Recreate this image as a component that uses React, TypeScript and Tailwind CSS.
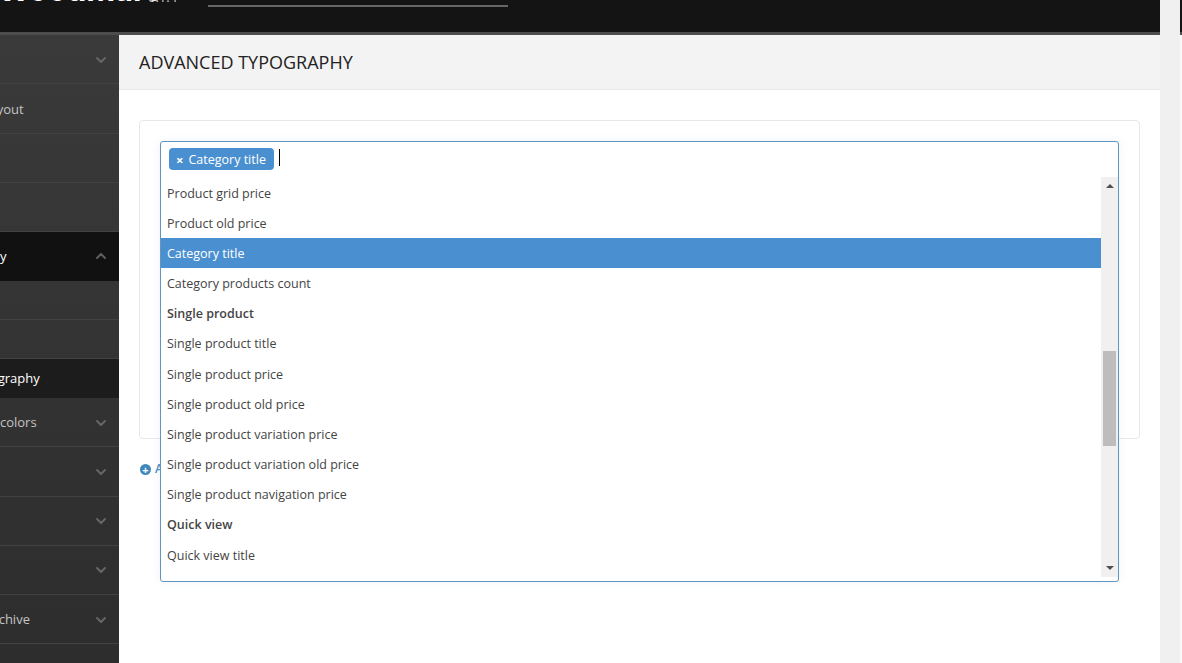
import { ChevronDown, ChevronUp } from "lucide-react";

const FONT = "font-['Open_Sans','Noto_Sans',sans-serif]";

type NavRow = { label: string; kind?: "open" | "sub" | "current"; chevron?: boolean };

const NAV: NavRow[] = [
  { label: "General", chevron: true },
  { label: "General layout" },
  { label: "Page title" },
  { label: "Footer" },
  { label: "Typography", kind: "open", chevron: true },
  { label: "Basic", kind: "sub" },
  { label: "Custom", kind: "sub" },
  { label: "Advanced typography", kind: "current" },
  { label: "Styles and colors", chevron: true },
  { label: "Blog", chevron: true },
  { label: "Portfolio", chevron: true },
  { label: "Shop", chevron: true },
  { label: "Product archive", chevron: true },
  { label: "Single" },
];

const OPTIONS: { label: string; group?: boolean; on?: boolean }[] = [
  { label: "Product grid price" },
  { label: "Product old price" },
  { label: "Category title", on: true },
  { label: "Category products count" },
  { label: "Single product", group: true },
  { label: "Single product title" },
  { label: "Single product price" },
  { label: "Single product old price" },
  { label: "Single product variation price" },
  { label: "Single product variation old price" },
  { label: "Single product navigation price" },
  { label: "Quick view", group: true },
  { label: "Quick view title" },
];

function SideRow({ row }: { row: NavRow }) {
  const sub = row.kind === "sub" || row.kind === "current";
  const height = sub ? "h-[39.2px]" : row.kind === "open" ? "h-[48.5px]" : "h-[49.25px]";
  return (
    <div
      className={`flex items-center justify-between border-b pr-[10px] text-[13px] ${height} ${
        row.kind === "open"
          ? "border-[#111111] bg-[#111111] text-white"
          : row.kind === "current"
            ? "border-[#1c1c1c] bg-[#1c1c1c] text-white"
            : "border-[#424242] text-[#c4c4c4]"
      }`}
    >
      <span
        className={`whitespace-nowrap pt-[2px] ${
          row.kind === "current" ? "-ml-[92px]" : "-ml-[65px]"
        }`}
      >
        {row.label}
      </span>
      {row.chevron &&
        (row.kind === "open" ? (
          <ChevronUp size={16} strokeWidth={3} className="mt-px text-[#5e5e5e]" />
        ) : (
          <ChevronDown size={16} strokeWidth={3} className="mt-px text-[#666666]" />
        ))}
    </div>
  );
}

function Dropdown() {
  return (
    <div className="absolute left-[41px] top-[51px] flex h-[441px] w-[959px] flex-col rounded-[3px] border border-[#6396bf] bg-white shadow-[0_0_8px_rgba(100,150,200,0.12)]">
      <div className="flex h-[35px] items-start pl-[8px] pt-[6px]">
        <span className="flex h-[22px] w-[105px] items-center gap-[5px] rounded-[4px] bg-[#4a90d0] pl-[7px] pt-[2px] text-[12.5px] text-white">
          <span className="text-[13px] font-bold leading-none">×</span>
          Category title
        </span>
        <span className="ml-[5px] mt-[1px] h-[17px] w-px bg-black" />
      </div>
      <div className="flex min-h-0 flex-1 pb-[4px]">
        <ul className="min-w-0 flex-1 overflow-hidden pt-px">
          {OPTIONS.map((o) => (
            <li
              key={o.label}
              className={`flex h-[30.17px] items-center pl-[6px] pt-[2px] text-[12.5px] ${
                o.on ? "bg-[#4a90d0] text-white" : "text-[#444444]"
              } ${o.group ? "font-semibold" : ""}`}
            >
              {o.label}
            </li>
          ))}
        </ul>
        <div className="flex w-[17px] flex-col items-center justify-between bg-[#f0f0f0] py-[7px]">
          <span className="h-0 w-0 border-x-[4px] border-b-[4px] border-x-transparent border-b-[#505050]" />
          <span className="mb-auto mt-[163px] h-[95px] w-[13px] bg-[#bdbdbd]" />
          <span className="h-0 w-0 border-x-[4px] border-t-[4px] border-x-transparent border-t-[#505050]" />
        </div>
      </div>
    </div>
  );
}

export default function App() {
  return (
    <div className={`flex h-[663px] w-[1182px] overflow-hidden bg-white ${FONT}`}>
      <div className="flex w-[1160px] shrink-0 flex-col">
        {/* Top bar, scrolled so only the feet of the logo show */}
        <header className="flex h-[35px] shrink-0 overflow-hidden border-b-[3px] border-[#4d4d4d] bg-[#141414]">
          <span className="-mt-[28px] -ml-[2px] h-[36px] w-[150px] shrink-0 font-['Inter',sans-serif] text-[31px] font-bold leading-[36px] text-white">
            WoodMart
          </span>
          <span className="-mt-[11px] h-[16px] w-[60px] shrink-0 text-[13px] leading-[16px] text-[#cccccc]">
            6.1.4
          </span>
          <span className="mt-[5px] h-[2px] w-[300px] bg-[#666666]" />
        </header>

        <div className="flex min-h-0 flex-1">
          <aside className="w-[119px] shrink-0 overflow-hidden bg-gradient-to-b from-[#3a3a3a] to-[#2d2d2d]">
            {NAV.map((row) => (
              <SideRow key={row.label} row={row} />
            ))}
          </aside>

          <main className="min-w-0 flex-1">
            <div className="flex h-[55px] items-center border-b border-[#e8e8e8] bg-[#f3f3f3] pl-[20px]">
              <h1 className="text-[18px] font-medium text-[#222222]">ADVANCED TYPOGRAPHY</h1>
            </div>
            <div className="relative px-[20px] pt-[30px]">
              <div className="h-[319px] rounded-[4px] border border-[#e8e8e8]" />
              <div className="mt-[21px] flex items-center gap-[4px] text-[12px] font-semibold text-[#4a90c2]">
                <span className="ml-px flex h-[11px] w-[11px] items-center justify-center rounded-full bg-[#3f87bd] text-[11px] font-bold leading-none text-white">
                  +
                </span>
                Add
              </div>
              <Dropdown />
            </div>
          </main>
        </div>
      </div>

      <div className="w-[20px] shrink-0 bg-[#f0f0f1]" />
      <div className="flex w-[2px] shrink-0 flex-col">
        <div className="h-[35px] border-b-[3px] border-[#4d4d4d] bg-[#141414]" />
        <div className="flex-1 bg-[#f9f9f9]" />
      </div>
    </div>
  );
}
